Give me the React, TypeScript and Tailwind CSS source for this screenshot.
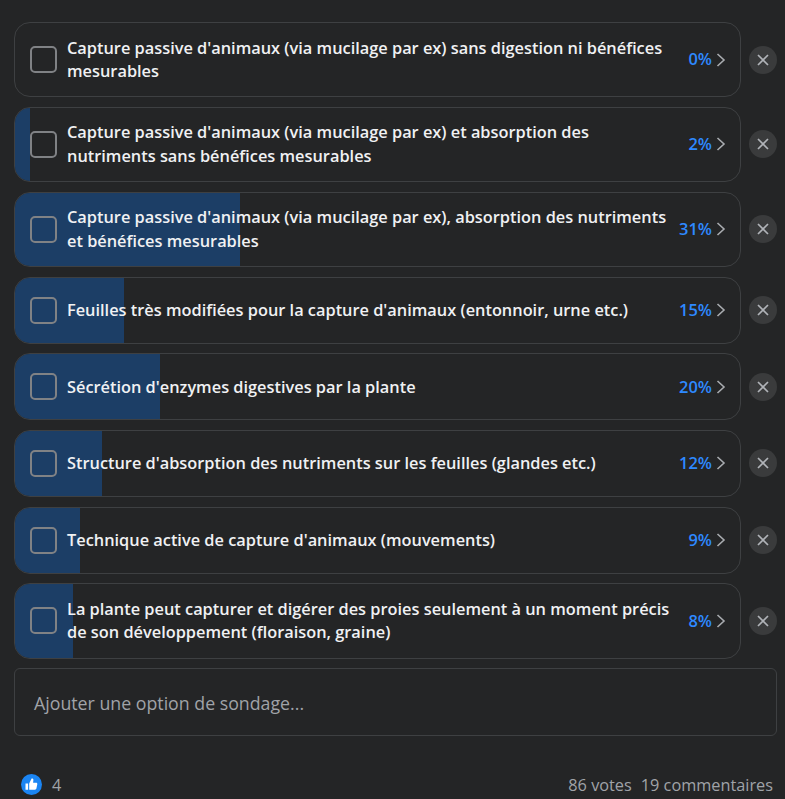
import React from "react";

type PollOption = { label: string; percent: number; tall: boolean };

const options: PollOption[] = [
  { label: "Capture passive d'animaux (via mucilage par ex) sans digestion ni bénéfices mesurables", percent: 0, tall: true },
  { label: "Capture passive d'animaux (via mucilage par ex) et absorption des nutriments sans bénéfices mesurables", percent: 2, tall: true },
  { label: "Capture passive d'animaux (via mucilage par ex), absorption des nutriments et bénéfices mesurables", percent: 31, tall: true },
  { label: "Feuilles très modifiées pour la capture d'animaux (entonnoir, urne etc.)", percent: 15, tall: false },
  { label: "Sécrétion d'enzymes digestives par la plante", percent: 20, tall: false },
  { label: "Structure d'absorption des nutriments sur les feuilles (glandes etc.)", percent: 12, tall: false },
  { label: "Technique active de capture d'animaux (mouvements)", percent: 9, tall: false },
  { label: "La plante peut capturer et digérer des proies seulement à un moment précis de son développement (floraison, graine)", percent: 8, tall: true },
];

const OptionRow: React.FC<{ option: PollOption }> = ({ option }) => (
  <div className="flex items-center">
    <div
      className={`relative flex w-[727px] items-center overflow-hidden rounded-[16px] border border-[#3e4042] ${
        option.tall ? "h-[75.1px]" : "h-[66.9px]"
      }`}
    >
      <div className="absolute inset-y-0 left-0 bg-[#1c3e66]" style={{ width: `${option.percent}%` }} />
      <div className="relative ml-[15px] h-[27px] w-[27px] shrink-0 rounded-[5px] border-2 border-[#808285]" />
      <div className="relative ml-[10px] w-[610px] pt-[1px] text-[16.35px] leading-[23.5px] font-semibold text-[#f0f1f3]">
        {option.label}
      </div>
      <div className="relative ml-auto mr-[14px] flex items-center gap-[4px]">
        <span className="text-[16.4px] font-semibold text-[#2e89ff]">{option.percent}%</span>
        <svg width="10" height="14" viewBox="0 0 10 14" fill="none" stroke="#a8abaf" strokeWidth="1.6">
          <path d="M1.5 1 L8 7 L1.5 13" />
        </svg>
      </div>
    </div>
    <div className="ml-[8px] flex h-7 w-7 items-center justify-center rounded-full bg-[#3a3b3c]">
      <svg width="12" height="12" viewBox="0 0 12 12" stroke="#b0b3b8" strokeWidth="1.7">
        <path d="M1 1 L11 11 M11 1 L1 11" />
      </svg>
    </div>
  </div>
);

export default function App() {
  return (
    <div className="h-[799px] w-[785px] overflow-hidden bg-[#242526] font-['Open_Sans',sans-serif]">
      <div className="flex flex-col gap-[9.8px] pt-[22px] pl-[14px]">
        {options.map((option) => (
          <OptionRow key={option.label} option={option} />
        ))}
      </div>
      <div className="mt-[9.4px] ml-[14px] flex h-[68px] w-[763px] items-center rounded-[6px] border border-[#3e4042] pt-[2px] pl-[19px] text-[17.75px] text-[#a0a3a8]">
        Ajouter une option de sondage...
      </div>
      <div className="mt-[37px] flex items-center justify-between pr-[12px] pl-[21px] text-[16.3px] text-[#a0a3a8]">
        <div className="flex items-center gap-[10px]">
          <svg width="21" height="21" viewBox="0 0 21 21" className="-mt-[1px]">
            <circle cx="10.5" cy="10.5" r="10.5" fill="#1b85f3" />
            <path
              d="M4.5 9.5h2.6v6.3H4.500zM8.200 9.600l2.400-5c.9-.5 1.900.1 1.800 1.300l-.3 2.900h3c.9 0 1.400.7 1.200 1.500l-.9 4.300c-.2.700-.7 1.200-1.400 1.200H8.200z"
              fill="#fff"
            />
          </svg>
          <span>4</span>
        </div>
        <div className="flex gap-[9px]">
          <span>86 votes</span>
          <span>19 commentaires</span>
        </div>
      </div>
    </div>
  );
}
